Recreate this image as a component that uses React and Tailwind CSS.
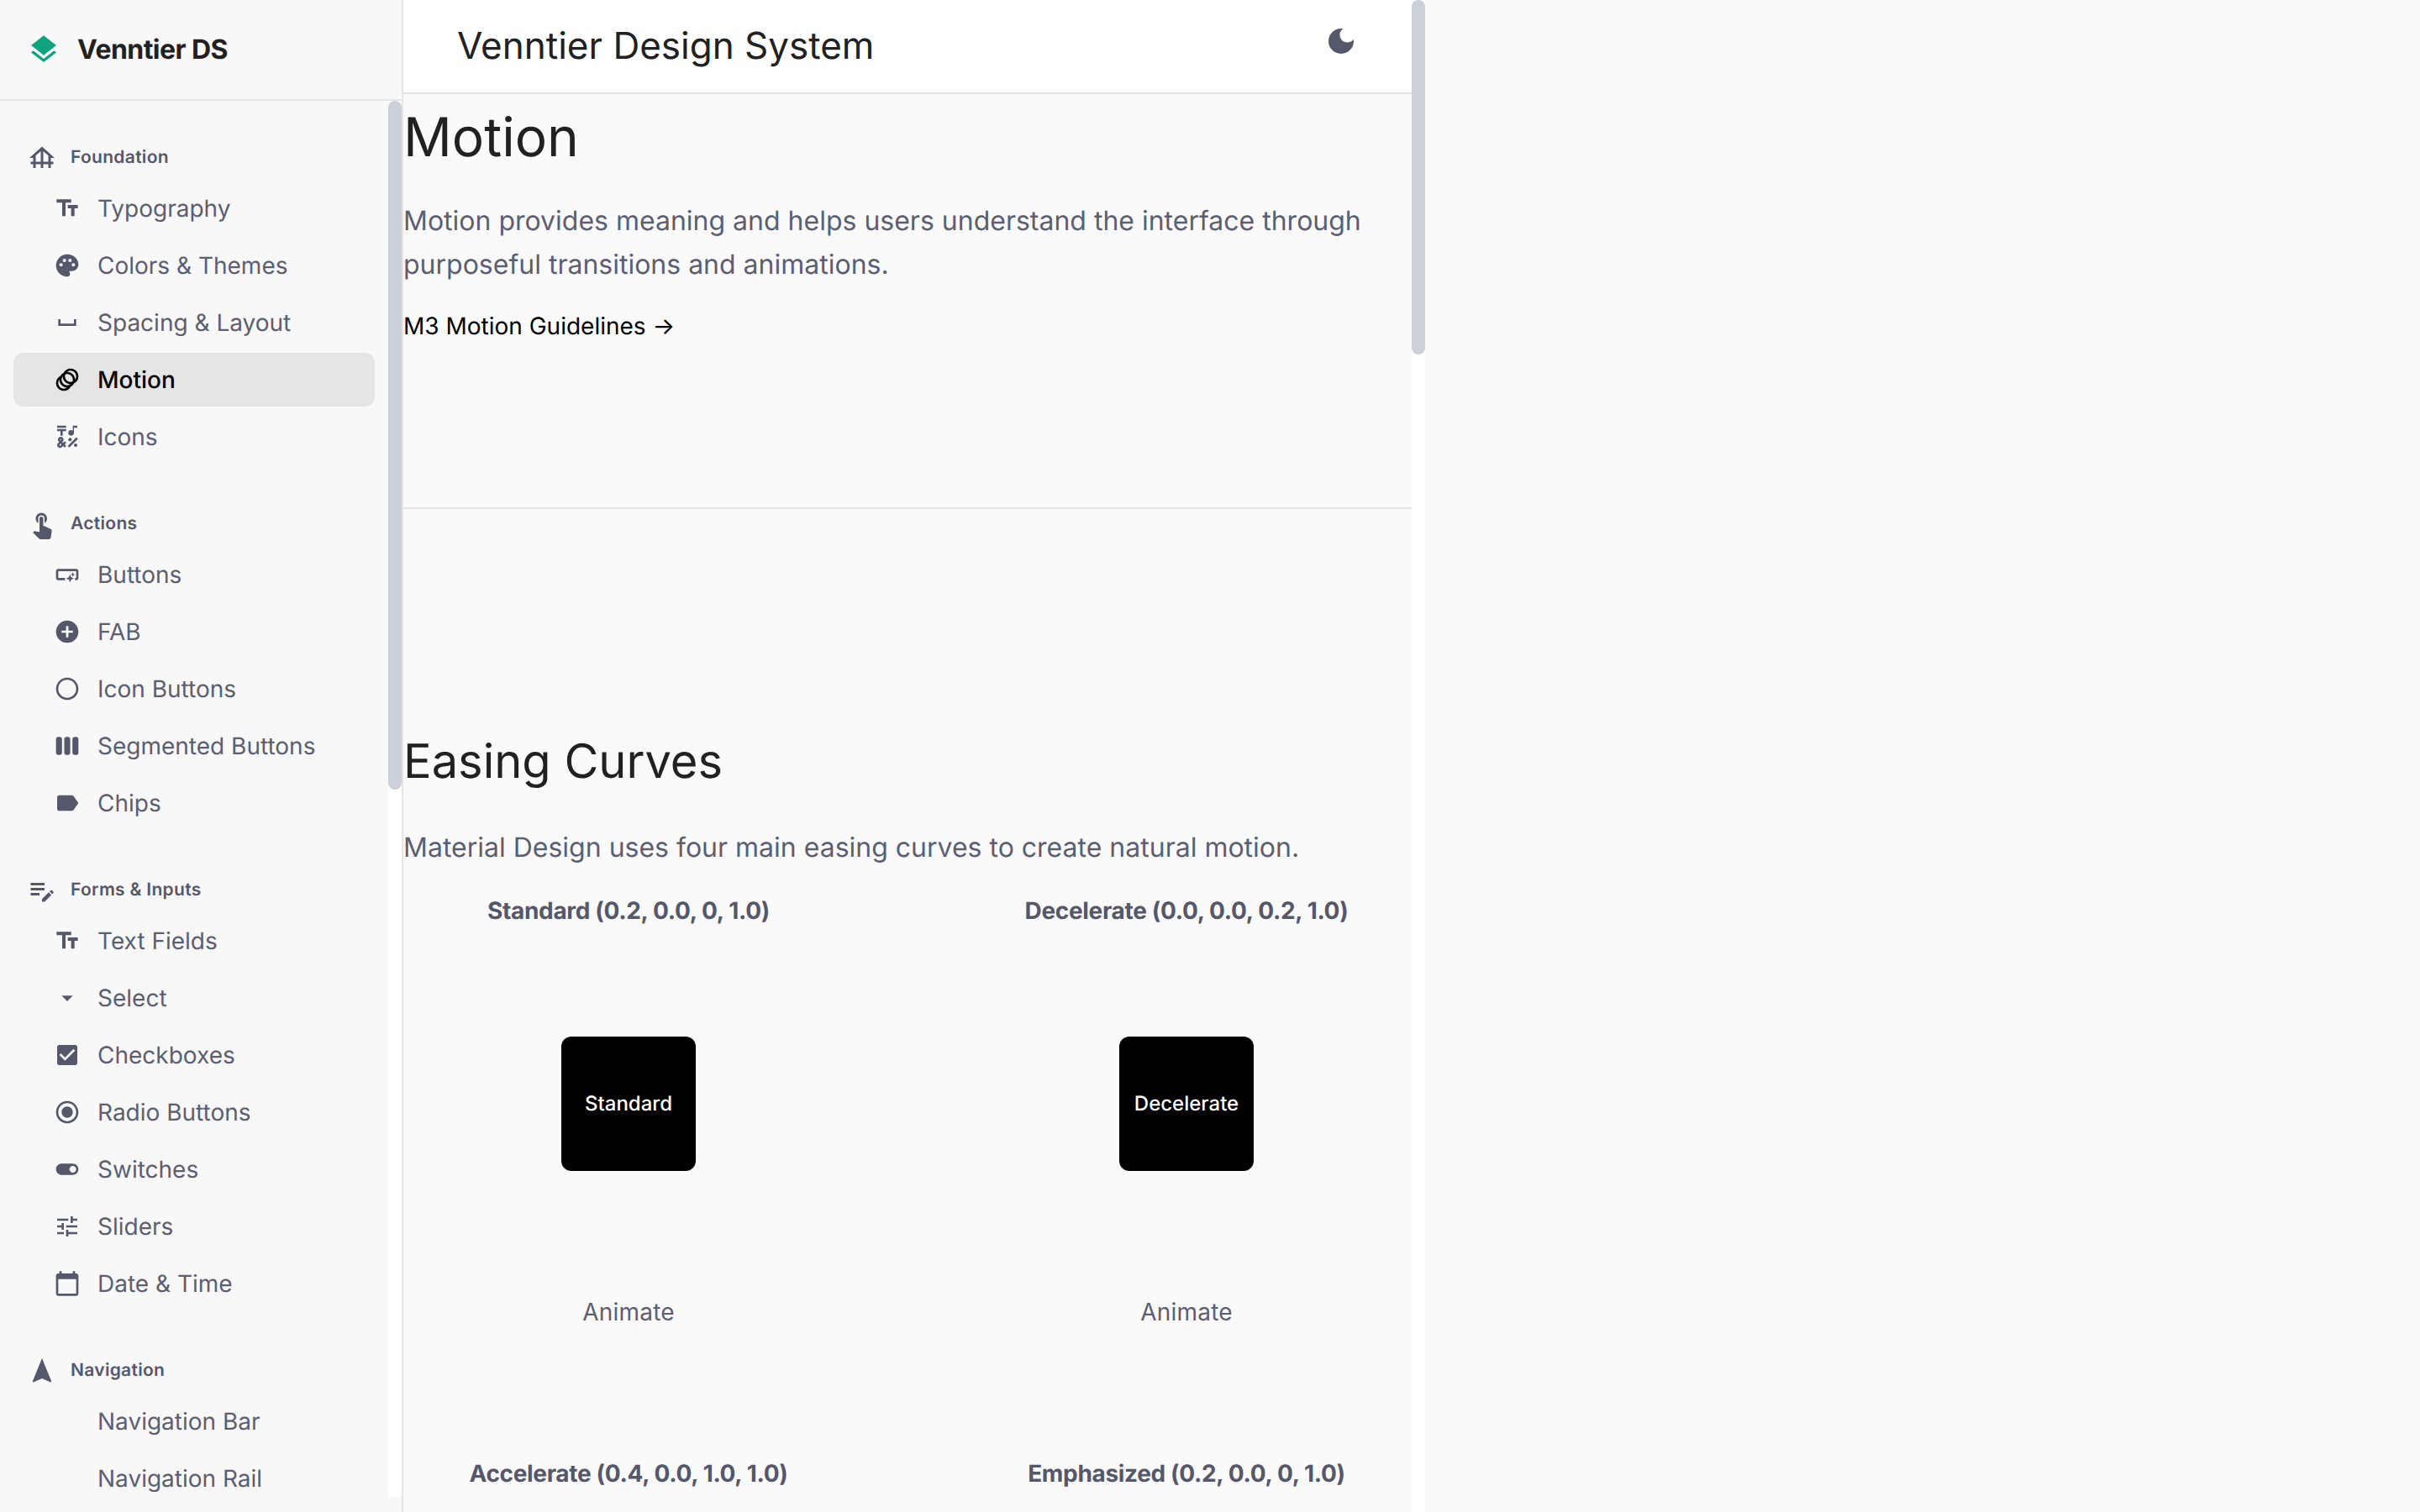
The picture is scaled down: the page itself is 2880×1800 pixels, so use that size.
import React from "react";
import {
  MdLayers, MdFoundation, MdTextFields, MdPalette, MdSpaceBar, MdAnimation, MdEmojiSymbols,
  MdTouchApp, MdSmartButton, MdAddCircle, MdRadioButtonUnchecked, MdViewWeek, MdLabel,
  MdEditNote, MdArrowDropDown, MdCheckBox, MdRadioButtonChecked, MdToggleOn, MdTune,
  MdCalendarToday, MdNavigation, MdDarkMode,
} from "react-icons/md";

const sections = [
  { title: "Foundation", icon: MdFoundation, items: [
    ["Typography", MdTextFields], ["Colors & Themes", MdPalette], ["Spacing & Layout", MdSpaceBar],
    ["Motion", MdAnimation, true], ["Icons", MdEmojiSymbols],
  ]},
  { title: "Actions", icon: MdTouchApp, items: [
    ["Buttons", MdSmartButton], ["FAB", MdAddCircle], ["Icon Buttons", MdRadioButtonUnchecked],
    ["Segmented Buttons", MdViewWeek], ["Chips", MdLabel],
  ]},
  { title: "Forms & Inputs", icon: MdEditNote, items: [
    ["Text Fields", MdTextFields], ["Select", MdArrowDropDown], ["Checkboxes", MdCheckBox],
    ["Radio Buttons", MdRadioButtonChecked], ["Switches", MdToggleOn], ["Sliders", MdTune],
    ["Date & Time", MdCalendarToday],
  ]},
  { title: "Navigation", icon: MdNavigation, items: [
    ["Navigation Bar", null], ["Navigation Rail", null],
  ]},
];

const curves = [
  ["Standard (0.2, 0.0, 0, 1.0)", "Standard"],
  ["Decelerate (0.0, 0.0, 0.2, 1.0)", "Decelerate"],
  ["Accelerate (0.4, 0.0, 1.0, 1.0)", "Accelerate"],
  ["Emphasized (0.2, 0.0, 0, 1.0)", "Emphasized"],
];

function NavItem({ label, Icon, active }) {
  return (
    <a className={`mx-4 mb-1 flex h-16 items-center gap-5 rounded-xl pl-12 text-[28px] ${active ? "bg-[#e5e5e5] font-medium text-black" : "text-[#5c5e72]"}`}>
      <span className={`flex h-8 w-8 shrink-0 items-center justify-center ${active ? "text-black" : "text-[#55576b]"}`}>
        {Icon ? <Icon size={32} /> : null}
      </span>
      <span>{label}</span>
    </a>
  );
}

export default function App() {
  return (
    <div className="flex h-[1800px] w-[2880px] overflow-hidden bg-[#fafafa] font-[Inter,sans-serif] text-[#212121] antialiased [text-rendering:geometricPrecision]">
      <aside className="flex h-full w-[480px] shrink-0 flex-col border-r-2 border-[#e5e5e5] bg-[#f8f8f8] pb-[18px]">
        <div className="flex h-[120px] shrink-0 items-center gap-5 border-b-2 border-[#e5e5e5] pl-8">
          <MdLayers size={40} className="text-[#10a37f]" />
          <span className="text-[32px] font-bold tracking-[-0.017em]">Venntier DS</span>
        </div>
        <div className="flex min-h-0 flex-1">
          <nav className="w-[462px] shrink-0 overflow-hidden">
            {sections.map((s) => (
              <section key={s.title} className="pt-[42px]">
                <div className="mb-[2px] flex h-[52px] items-center gap-4 pl-8 text-[21px] font-semibold tracking-[0.3px] text-[#55576b]">
                  <s.icon size={36} />
                  <span>{s.title}</span>
                </div>
                {s.items.map(([label, Icon, active]) => (
                  <NavItem key={label} label={label} Icon={Icon} active={active} />
                ))}
              </section>
            ))}
          </nav>
          <div className="w-4 shrink-0 bg-white">
            <div className="h-[820px] rounded-full bg-[#cbd0d9]" />
          </div>
        </div>
      </aside>

      <main className="h-full w-[1200px] shrink-0 overflow-hidden">
        <header className="flex h-[112px] items-center justify-between border-b-2 border-[#e5e5e5] bg-white pb-[2px] pl-16 pr-16">
          <h1 className="text-[44px] font-normal">Venntier Design System</h1>
          <MdDarkMode size={40} className="mb-[10px] text-[#55576b]" />
        </header>
        <div className="h-[494px] border-b-2 border-[#e5e5e5] pt-[12px]">
          <h1 className="text-[64px] leading-[80px]">Motion</h1>
          <p className="mt-[33px] text-[32px] leading-[52px] text-[#5c5e72]">
            Motion provides meaning and helps users understand the interface through purposeful transitions and animations.
          </p>
          <a className="mt-[27px] block text-[28px] leading-[40px] text-black">M3 Motion Guidelines →</a>
        </div>
        <h2 className="mt-[264px] text-[56px] leading-[72px]">Easing Curves</h2>
        <p className="mt-[41px] text-[32px] leading-[52px] text-[#5c5e72]">
          Material Design uses four main easing curves to create natural motion.
        </p>
        <div className="mt-[31px] grid grid-cols-2 gap-x-32">
          {curves.map(([label, name]) => (
            <div key={name} className="flex h-[670px] flex-col items-center">
              <h4 className="text-[28px] font-bold leading-[36px] tracking-[-0.012em] text-[#55576b]">{label}</h4>
              <div className="mt-[132px] flex h-40 w-40 items-center justify-center rounded-xl bg-black text-[24px] font-medium text-white">
                {name}
              </div>
              <button className="mt-[148px] text-[28px] leading-[40px] tracking-[0.2px] text-[#5c5e72]">Animate</button>
            </div>
          ))}
        </div>
      </main>
      <div className="h-full w-4 shrink-0 bg-white">
        <div className="h-[422px] rounded-full bg-[#cbd0d9]" />
      </div>
    </div>
  );
}
